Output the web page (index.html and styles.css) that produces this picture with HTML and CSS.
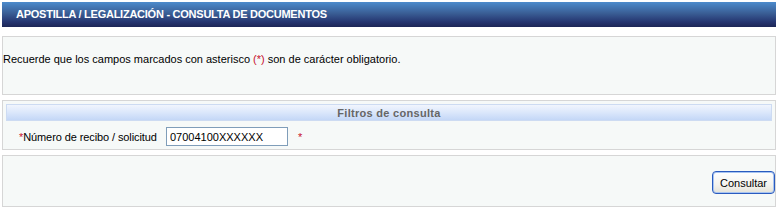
FILE: index.html
```html
<!DOCTYPE html>
<html lang="es">

<head>
  <meta charset="utf-8">
  <title>Apostilla / Legalización - Consulta de documentos</title>
  <link rel="stylesheet" href="styles.css">
</head>

<body>
  <div class="titlebar">APOSTILLA / LEGALIZACIÓN - CONSULTA DE DOCUMENTOS</div>

  <div class="box box-info">
    <p>Recuerde que los campos marcados con asterisco <span class="req">(*)</span> son de carácter obligatorio.</p>
  </div>

  <div class="box box-filters">
    <div class="filters-head">Filtros de consulta</div>
    <div class="field-row">
      <label class="field-label" for="recibo"><span class="req">*</span>Número de recibo / solicitud</label>
      <input class="field-input" id="recibo" type="text" value="07004100XXXXXX">
      <span class="req req-mark">*</span>
    </div>
  </div>

  <div class="box box-actions">
    <button class="btn" type="button">Consultar</button>
  </div>
</body>

</html>
```

FILE: styles.css
```css
* {
  box-sizing: border-box;
}

body {
  margin: 2px 2px 0 2px;
  background: #fff;
  font-family: "Liberation Sans", Arial, sans-serif;
  font-size: 11px;
  color: #000;
}

.titlebar {
  height: 25px;
  margin-right: -1px;
  padding: 6px 0 0 14px;
  background: linear-gradient(to bottom, #4c8bcc 0%, #3a5e95 45%, #253570 80%, #1d2656 100%);
  color: #fff;
  font-weight: bold;
  font-size: 11px;
  letter-spacing: -0.25px;
}

.box {
  border: 1px solid #d6d6d6;
  background: #f6f9f8;
}

.req {
  color: #c8102e;
}

/* aviso */
.box-info {
  margin-top: 9px;
  height: 59px;
  padding: 16px 0 0 0;
}

.box-info p {
  margin: 0;
}

/* filtros */
.box-filters {
  margin-top: 5px;
  height: 50px;
  padding: 3px 3px 0;
}

.filters-head {
  height: 17px;
  padding-top: 2px;
  border: 1px solid #cddbf2;
  background: linear-gradient(to bottom, #f1f5fd 0%, #dbe7fb 50%, #c4d7f7 100%);
  text-align: center;
  font-weight: bold;
  color: #666;
  letter-spacing: 0.3px;
}

.field-row {
  display: flex;
  align-items: center;
  margin-top: 6px;
  padding-left: 13px;
}

.field-label {
  width: 147px;
  letter-spacing: -0.1px;
}

.field-input {
  width: 122px;
  height: 19px;
  padding: 1px 3px;
  border: 1px solid #7f9db9;
  background: #fff;
  font-family: "Liberation Sans", Arial, sans-serif;
  font-size: 11px;
  color: #000;
}

.req-mark {
  margin-left: 10px;
}

/* acciones */
.box-actions {
  margin-top: 5px;
  height: 52px;
  display: flex;
  justify-content: flex-end;
  align-items: flex-start;
  padding: 15px 0 0;
}

.btn {
  width: 63px;
  height: 23px;
  padding: 0;
  border: 1px solid #2a5bbf;
  border-radius: 4px;
  background: linear-gradient(to bottom, #ffffff 0%, #f4f3ee 60%, #e4e2d8 100%);
  box-shadow: inset 0 0 0 1px #a8c4f0;
  font-family: "Liberation Sans", Arial, sans-serif;
  font-size: 11px;
  color: #000;
}
```
